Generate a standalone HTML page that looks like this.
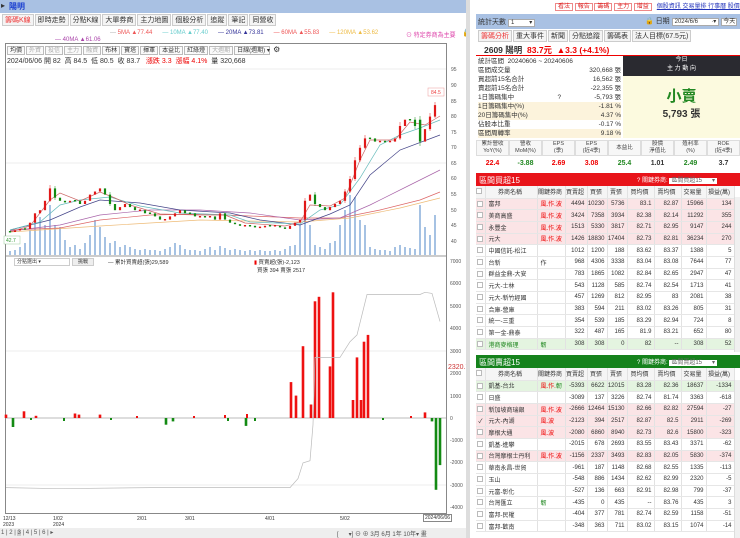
<!DOCTYPE html>
<html><head><meta charset="utf-8">
<style>
*{box-sizing:border-box;margin:0;padding:0}
body{width:740px;height:538px;overflow:hidden;background:#fff;font-family:"Liberation Sans","Noto Sans CJK TC",sans-serif;font-size:7px;color:#333;position:relative}
.a{position:absolute;white-space:nowrap}
.tab{display:inline-block;border:1px solid #ccc;background:#f4f4f4;padding:1px 2px;margin-right:1px;font-size:7px;height:12px;line-height:9px}
.btn{display:inline-block;border:1px solid #bbb;background:#fafafa;padding:0 2px;font-size:6px;height:9px;line-height:8px;margin-right:1px}
table{border-collapse:collapse;width:100%;table-layout:fixed}
td{font-size:6px;height:11.7px;border-right:1px solid #e2e2e2;border-bottom:1px solid #e6e6e6;text-align:right;padding-right:2px;white-space:nowrap;overflow:hidden}
td.n{text-align:left;padding-left:3px}
tr.h td{background:#f5f5f5;text-align:center;height:12px}
tr.p td{background:#fbe4e6}
tr.g td{background:#e4f4e0}
.r{color:#e00}
.cb{display:inline-block;width:6px;height:6px;border:1px solid #bbb;background:#fff;vertical-align:middle}
</style></head><body>
<div class="a" style="left:0;top:0;width:470px;height:13px;background:#a9c1e3"></div>
<div class="a" style="left:1px;top:1px;font-size:8px">▸</div>
<div class="a" style="left:9px;top:1px;font-size:8px;color:#1a3fd0;font-weight:bold">陽明</div>
<div class="a" style="left:2px;top:14px"><span class="tab" style="color:#e33">籌碼K線</span><span class="tab">即時走勢</span><span class="tab">分點K線</span><span class="tab">大單券商</span><span class="tab">主力地圖</span><span class="tab">個股分析</span><span class="tab">追蹤</span><span class="tab">筆記</span><span class="tab">同營收</span></div>
<div class="a" style="left:110px;top:30px;font-size:6px"><span style="color:#aaa">—</span> <span style="color:#e55">5MA ▲77.44</span> &nbsp;&nbsp;&nbsp;&nbsp; <span style="color:#6cc">— 10MA ▲77.40</span> &nbsp;&nbsp;&nbsp;&nbsp; <span style="color:#339">— 20MA ▲73.81</span> &nbsp;&nbsp;&nbsp;&nbsp; <span style="color:#e55">— 60MA ▲55.83</span> &nbsp;&nbsp;&nbsp;&nbsp; <span style="color:#eb4">— 120MA ▲53.62</span></div>
<div class="a" style="left:406px;top:30px;font-size:6px;color:#d4a">⊙ 特定券商為主要</div>
<div class="a" style="left:462px;top:28px;font-size:8px">🔒</div>
<div class="a" style="left:55px;top:37px;font-size:6px;color:#a4a">— 40MA ▲61.06</div>
<div class="a" style="left:5px;top:43px;width:442px;height:471px;border:1px solid #888"></div>
<div class="a" style="left:7px;top:45px"><span class="btn">均價</span><span class="btn" style="color:#aaa">外資</span><span class="btn" style="color:#aaa">投信</span><span class="btn" style="color:#aaa">主力</span><span class="btn" style="color:#aaa">融資</span><span class="btn">布林</span><span class="btn">寶塔</span><span class="btn">揮軍</span><span class="btn">本益比</span><span class="btn">紅綠燈</span><span class="btn" style="color:#aaa">大週期</span><span class="btn" style="width:36px">日線(週期) ▾</span> <span style="font-size:8px">⚙</span></div>
<div class="a" style="left:7px;top:56px;font-size:7px">2024/06/06 開 82 &nbsp;高 84.5 &nbsp;低 80.5 &nbsp;收 83.7 &nbsp; <span class="r">漲跌 3.3 &nbsp;漲幅 4.1%</span> &nbsp;量 320,668</div>

<svg class="a" style="left:0;top:0" width="470" height="538">
<g font-size="5" fill="#555">
<text x="451" y="71">95</text><text x="451" y="87">90</text><text x="451" y="103">85</text><text x="451" y="118">80</text><text x="451" y="134">75</text><text x="451" y="149">70</text><text x="451" y="165">65</text><text x="451" y="180">60</text><text x="451" y="196">55</text><text x="451" y="212">50</text><text x="451" y="227">45</text><text x="451" y="243">40</text>
<text x="450" y="263">7000</text><text x="450" y="285">6000</text><text x="450" y="308">5000</text><text x="450" y="330">4000</text><text x="450" y="353">3000</text><text x="450" y="375">2000</text><text x="450" y="398">1000</text><text x="450" y="420">0</text><text x="450" y="442">-1000</text><text x="450" y="464">-2000</text><text x="450" y="487">-3000</text><text x="450" y="509">-4000</text>
</g>
<g stroke="#eee"><line x1="6" x2="446" y1="69" y2="69"/><line x1="6" x2="446" y1="163" y2="163"/><line x1="6" x2="446" y1="351" y2="351"/><line x1="6" x2="446" y1="485" y2="485"/></g>
<line x1="6" x2="446" y1="256" y2="256" stroke="#999"/>
<line x1="6" x2="446" y1="418" y2="418" stroke="#bbb"/>
<path fill="none" stroke="#8fb3dc" stroke-width="1.6" d="M10 255v-4M15 255v-5M20 255v-8M25 255v-12M30 255v-25M35 255v-40M40 255v-38M45 255v-30M50 255v-50M55 255v-30M60 255v-28M65 255v-15M70 255v-8M75 255v-10M80 255v-6M85 255v-12M90 255v-20M95 255v-35M100 255v-28M105 255v-18M110 255v-12M115 255v-14M120 255v-8M125 255v-10M130 255v-8M135 255v-6M140 255v-5M145 255v-6M150 255v-5M155 255v-5M160 255v-4M165 255v-6M170 255v-8M175 255v-12M180 255v-10M185 255v-6M190 255v-5M195 255v-5M200 255v-4M205 255v-6M210 255v-8M215 255v-5M220 255v-9M225 255v-7M230 255v-5M235 255v-6M240 255v-5M245 255v-4M250 255v-5M255 255v-4M260 255v-5M265 255v-4M270 255v-4M275 255v-5M280 255v-4M285 255v-6M290 255v-9M295 255v-10M300 255v-30M305 255v-40M310 255v-30M315 255v-10M320 255v-8M325 255v-6M330 255v-12M335 255v-14M340 255v-30M345 255v-45M350 255v-60M355 255v-58M360 255v-35M365 255v-30M370 255v-8M375 255v-6M380 255v-5M385 255v-5M390 255v-4M395 255v-8M400 255v-10M405 255v-8M410 255v-7M415 255v-6M420 255v-50M425 255v-28M430 255v-20M435 255v-40"/>
<g fill="none" stroke-width="0.7">
<polyline stroke="#eb7" points="10,232 100,226 200,220 300,222 350,218 400,208 440,198"/>
<polyline stroke="#d66" points="10,230 60,228 100,220 150,215 200,214 250,216 300,218 340,218 380,210 420,200 440,192"/>
<polyline stroke="#a6a" points="10,231 60,225 100,215 150,210 200,210 250,213 300,220 340,218 370,205 410,185 440,170"/>
<polyline stroke="#448" points="10,230 50,220 80,207 100,200 140,203 180,210 230,213 260,220 300,225 330,214 350,205 370,175 400,150 440,135"/>
<polyline stroke="#6bb" points="10,230 40,222 60,205 80,200 110,197 140,206 180,213 230,215 250,222 300,224 320,210 340,205 360,178 380,145 400,135 420,128 440,120"/>
<polyline stroke="#c66" points="10,232 30,226 50,200 60,193 80,201 100,192 115,198 130,205 160,214 200,215 225,215 245,223 285,226 300,222 310,205 330,206 345,198 360,160 370,140 395,140 410,122 425,125 440,116"/>
</g>
<g fill="#e01818">
<rect x="13.9" y="230.5" width="2.2" height="1.5"/><rect x="18.9" y="228.9" width="2.2" height="1.6"/><rect x="28.9" y="222.7" width="2.2" height="6.2"/><rect x="33.9" y="213.3" width="2.2" height="9.4"/><rect x="38.9" y="210.2" width="2.2" height="3.1"/><rect x="43.9" y="200.8" width="2.2" height="9.4"/><rect x="48.9" y="188.4" width="2.2" height="12.4"/><rect x="68.9" y="200.8" width="2.2" height="1.6"/><rect x="83.9" y="200.8" width="2.2" height="3.2"/><rect x="88.9" y="194.6" width="2.2" height="6.2"/><rect x="93.9" y="191.5" width="2.2" height="3.1"/><rect x="98.9" y="188.4" width="2.2" height="3.1"/><rect x="118.9" y="207.1" width="2.2" height="3.1"/><rect x="123.9" y="204" width="2.2" height="3.1"/><rect x="138.9" y="209.5" width="2.2" height="1.5"/><rect x="163.9" y="219" width="2.2" height="1.5"/><rect x="168.9" y="216.4" width="2.2" height="3.2"/><rect x="173.9" y="213.3" width="2.2" height="3.1"/><rect x="178.9" y="210.2" width="2.2" height="3.1"/><rect x="198.9" y="216" width="2.2" height="1.5"/><rect x="208.9" y="216" width="2.2" height="1.5"/><rect x="218.9" y="213.3" width="2.2" height="6.3"/><rect x="243.9" y="225" width="2.2" height="1.5"/><rect x="258.9" y="226.6" width="2.2" height="1.5"/><rect x="263.9" y="225.8" width="2.2" height="1.6"/><rect x="273.9" y="225" width="2.2" height="1.5"/><rect x="288.9" y="225.8" width="2.2" height="3.1"/><rect x="293.9" y="222.7" width="2.2" height="3.1"/><rect x="298.9" y="219.6" width="2.2" height="3.1"/><rect x="303.9" y="200.8" width="2.2" height="18.8"/><rect x="308.9" y="194.6" width="2.2" height="6.2"/><rect x="328.9" y="207.1" width="2.2" height="3.1"/><rect x="333.9" y="204" width="2.2" height="3.1"/><rect x="338.9" y="200.8" width="2.2" height="3.2"/><rect x="343.9" y="191.5" width="2.2" height="9.3"/><rect x="348.9" y="179" width="2.2" height="12.5"/><rect x="353.9" y="160.3" width="2.2" height="18.7"/><rect x="358.9" y="147.8" width="2.2" height="12.5"/><rect x="363.9" y="138.4" width="2.2" height="9.4"/><rect x="378.9" y="140.8" width="2.2" height="1.5"/><rect x="388.9" y="140.8" width="2.2" height="1.5"/><rect x="393.9" y="138.4" width="2.2" height="3.2"/><rect x="398.9" y="126" width="2.2" height="12.4"/><rect x="403.9" y="119.7" width="2.2" height="6.3"/><rect x="423.9" y="129.1" width="2.2" height="12.5"/><rect x="428.9" y="116.6" width="2.2" height="12.5"/><rect x="433.9" y="105.1" width="2.2" height="11.5"/>
</g>
<path fill="none" stroke="#e01818" stroke-width="0.5" d="M50 185V202M305 198V222M355 157V181M360 145V162M365 135V149M400 122V140M430 113V131M435 102V118M350 176V193M345 189V203"/>
<g fill="#138a13">
<rect x="8.9" y="231" width="2.2" height="1.5"/><rect x="23.9" y="228.2" width="2.2" height="1.5"/><rect x="53.9" y="188.4" width="2.2" height="9.3"/><rect x="58.9" y="197.7" width="2.2" height="3.1"/><rect x="63.9" y="200.8" width="2.2" height="1.6"/><rect x="73.9" y="200" width="2.2" height="1.5"/><rect x="78.9" y="200.8" width="2.2" height="3.2"/><rect x="103.9" y="188.4" width="2.2" height="6.2"/><rect x="108.9" y="194.6" width="2.2" height="9.4"/><rect x="113.9" y="204" width="2.2" height="6.2"/><rect x="128.9" y="204" width="2.2" height="3.1"/><rect x="133.9" y="207.1" width="2.2" height="3.1"/><rect x="143.9" y="210.2" width="2.2" height="3.1"/><rect x="148.9" y="212.5" width="2.2" height="1.5"/><rect x="153.9" y="213.3" width="2.2" height="3.1"/><rect x="158.9" y="216.4" width="2.2" height="3.2"/><rect x="183.9" y="210.2" width="2.2" height="3.1"/><rect x="188.9" y="212.5" width="2.2" height="1.5"/><rect x="193.9" y="213.3" width="2.2" height="3.1"/><rect x="203.9" y="216" width="2.2" height="1.5"/><rect x="213.9" y="216.4" width="2.2" height="3.2"/><rect x="223.9" y="213.3" width="2.2" height="6.3"/><rect x="228.9" y="219.6" width="2.2" height="3.1"/><rect x="233.9" y="222.7" width="2.2" height="1.5"/><rect x="238.9" y="224.2" width="2.2" height="1.6"/><rect x="248.9" y="225" width="2.2" height="1.5"/><rect x="253.9" y="225.8" width="2.2" height="1.6"/><rect x="268.9" y="225" width="2.2" height="1.5"/><rect x="278.9" y="225.8" width="2.2" height="1.6"/><rect x="283.9" y="227.4" width="2.2" height="1.5"/><rect x="313.9" y="194.6" width="2.2" height="9.4"/><rect x="318.9" y="204" width="2.2" height="3.1"/><rect x="323.9" y="207.1" width="2.2" height="3.1"/><rect x="368.9" y="137.6" width="2.2" height="1.5"/><rect x="373.9" y="138.4" width="2.2" height="3.2"/><rect x="383.9" y="140.8" width="2.2" height="1.5"/><rect x="408.9" y="119" width="2.2" height="1.5"/><rect x="413.9" y="119.7" width="2.2" height="6.3"/><rect x="418.9" y="119.7" width="2.4" height="21.9"/>
</g>
<path fill="none" stroke="#138a13" stroke-width="0.5" d="M55 186V200M110 192V206M315 192V206M420 116V146M415 117V129"/>
<rect x="428" y="88" width="16" height="8" fill="#fff" stroke="#e99" stroke-width="0.5"/><text x="431" y="94" font-size="5" fill="#e44">84.5</text>
<rect x="4" y="236" width="16" height="8" fill="#fff" stroke="#9c9" stroke-width="0.5"/><text x="6" y="242" font-size="5" fill="#393">42.7</text>
<g fill="#ee1111">
<rect x="4.7" y="414.6" width="2.6" height="3.4"/><rect x="22.7" y="411.3" width="2.6" height="6.7"/><rect x="34.7" y="415.8" width="2.6" height="2.2"/><rect x="73.7" y="413.5" width="2.6" height="4.5"/><rect x="77.7" y="414.6" width="2.6" height="3.4"/><rect x="98.7" y="414.6" width="2.6" height="3.4"/><rect x="136" y="416" width="2" height="2"/><rect x="193" y="416" width="2" height="2"/><rect x="224" y="415" width="2" height="3"/><rect x="246" y="414" width="2" height="4"/>
<rect x="289.7" y="382.1" width="2.6" height="35.9"/><rect x="294.7" y="395.6" width="2.6" height="22.4"/><rect x="301.7" y="346.2" width="2.6" height="71.8"/><rect x="309.7" y="404.5" width="2.6" height="13.5"/><rect x="313.7" y="301.3" width="2.6" height="116.7"/><rect x="317.7" y="296.8" width="2.6" height="121.2"/><rect x="328.7" y="366.4" width="2.6" height="51.6"/><rect x="331.7" y="292.3" width="2.6" height="125.7"/><rect x="351.7" y="400" width="2.6" height="18"/><rect x="355.7" y="357.4" width="2.6" height="60.6"/><rect x="359.7" y="400" width="2.6" height="18"/><rect x="362.7" y="341.7" width="2.6" height="76.3"/><rect x="366.7" y="334.9" width="2.6" height="83.1"/><rect x="423.7" y="412.4" width="2.6" height="5.6"/><rect x="410" y="416" width="2" height="2"/>
</g>
<g fill="#138a13">
<rect x="11.7" y="418" width="2.6" height="9"/><rect x="30" y="418" width="2" height="2"/><rect x="63" y="418" width="2" height="3"/><rect x="110" y="418" width="2" height="2"/><rect x="164.7" y="418" width="2.6" height="6.7"/><rect x="171.7" y="418" width="2.6" height="3.4"/><rect x="227" y="418" width="2" height="3"/><rect x="244.7" y="418" width="2.6" height="7.9"/><rect x="254" y="418" width="2" height="3"/><rect x="382" y="418" width="2" height="2"/><rect x="430.7" y="418" width="2.6" height="3.4"/><rect x="434.7" y="418" width="2.6" height="71.8"/><rect x="438.7" y="418" width="2.6" height="47.1"/>
</g>
<polyline fill="none" stroke="#bbb" stroke-width="0.7" points="6,487.6 60,488.7 150,487.6 290,487.6 298,478.6 303,462.9 310,460.7 313,424.7 315,357.4 340,357.4 350,341.7 357,334.9 367,294.5 420,294.5 425,292.3 432,293.4 440,321.5"/>
</svg>

<div class="a" style="left:14px;top:258px;width:56px;height:8px;border:1px solid #ccc;font-size:5px;padding-left:2px;line-height:6px">分點選出 ▾</div>
<div class="a" style="left:72px;top:258px;width:22px;height:8px;border:1px solid #ccc;background:#eee;font-size:5px;text-align:center;line-height:6px">挑戰</div>
<div class="a" style="left:108px;top:258px;font-size:5.5px">— 累計買賣超(張)29,589</div>
<div class="a" style="left:254px;top:258px;font-size:5.5px"><span style="color:#e00">▮</span> 買賣超(張)-2,123<br>&nbsp;&nbsp;買張 394 賣張 2517</div>
<div class="a" style="left:448px;top:364px;font-size:7px;color:#c33">2320.7</div>
<div class="a" style="left:3px;top:516px;font-size:5px;line-height:6px">12/13<br>2023</div>
<div class="a" style="left:53px;top:516px;font-size:5px;line-height:6px">1/02<br>2024</div>
<div class="a" style="left:137px;top:516px;font-size:5px">2/01</div>
<div class="a" style="left:185px;top:516px;font-size:5px">3/01</div>
<div class="a" style="left:265px;top:516px;font-size:5px">4/01</div>
<div class="a" style="left:340px;top:516px;font-size:5px">5/02</div>
<div class="a" style="left:423px;top:514px;font-size:5px;border:1px solid #888;padding:0 1px;background:#fff">2024/06/06</div>
<div class="a" style="left:0;top:528px;width:470px;height:10px;background:#eee"></div>
<div class="a" style="left:1px;top:529px;font-size:6px;color:#555">1 | 2 | <span style="background:#ccc">3</span> | 4 | 5 | 6 | ▸</div>
<div class="a" style="left:337px;top:529px;font-size:6px;color:#555">[&nbsp;&nbsp;&nbsp;&nbsp;&nbsp;&nbsp;▾] ⊖ ⊕ 3月 6月 1年 10年▾ 畫</div>
<div class="a" style="left:466px;top:0;width:4px;height:538px;background:#ddd"></div>

<div class="a" style="left:555px;top:1px;font-size:6px">
<span style="border:1px solid #e88;color:#d22;padding:0 2px">看法</span> <span style="border:1px solid #e88;color:#d22;padding:0 2px">報告</span> <span style="border:1px solid #e88;color:#d22;padding:0 2px">籌碼</span> <span style="border:1px solid #e88;color:#d22;padding:0 2px">主力</span> <span style="border:1px solid #e88;color:#d22;padding:0 2px">增益</span>
&nbsp; <span style="color:#23b;text-decoration:underline">個股資訊 交易量排 行事曆 股價通知</span></div>
<div class="a" style="left:476px;top:14px;width:264px;height:15px;background:#a9c1e3"></div>
<div class="a" style="left:478px;top:17px;font-size:7px">統計天數 <span style="background:#fff;border:1px solid #aaa;padding:0 2px;font-size:6px">1 &nbsp;&nbsp;&nbsp;&nbsp;&nbsp;&nbsp;&nbsp;&nbsp;▾</span></div>
<div class="a" style="left:645px;top:16px;font-size:7px">🔒 日期 <span style="background:#fff;border:1px solid #aaa;padding:0 2px;font-size:6px">2024/6/6 &nbsp;&nbsp;&nbsp;&nbsp;&nbsp;&nbsp;&nbsp;·▾</span> <span style="background:#fff;border:1px solid #aaa;padding:0 1px;font-size:6px">今天</span></div>
<div class="a" style="left:478px;top:30px;font-size:6px"><span class="tab" style="color:#e33">籌碼分析</span><span class="tab">重大事件</span><span class="tab">新聞</span><span class="tab">分點追蹤</span><span class="tab">籌碼表</span><span class="tab">法人目標(67.5元)</span></div>
<div class="a" style="left:476px;top:43px;width:264px;height:13px;border-bottom:1px solid #e00"></div>
<div class="a" style="left:484px;top:44px;font-size:8.5px;font-weight:bold">2609 陽明 &nbsp;<span class="r">83.7元 &nbsp;▲3.3 (+4.1%)</span></div>
<div class="a" style="left:478px;top:57px;width:143px;font-size:6.5px;line-height:9px">
<div>統計區間 &nbsp;20240606 ~ 20240606</div>
<div>區間成交量<span style="float:right">320,668 張</span></div>
<div>買超前15名合計<span style="float:right">16,562 張</span></div>
<div>賣超前15名合計<span style="float:right">-22,355 張</span></div>
<div>1日籌碼集中 &nbsp;&nbsp;&nbsp;&nbsp;&nbsp;&nbsp;&nbsp;&nbsp;&nbsp;&nbsp;&nbsp;&nbsp;&nbsp;&nbsp;&nbsp;&nbsp;&nbsp;&nbsp;&nbsp;&nbsp;&nbsp;&nbsp;&nbsp;?<span style="float:right">-5,793 張</span></div>
<div style="background:#fcf3dc">1日籌碼集中(%)<span style="float:right">-1.81 %</span></div>
<div style="background:#fcf3dc">20日籌碼集中(%)<span style="float:right">4.37 %</span></div>
<div>佔股本比重<span style="float:right">-0.17 %</span></div>
<div style="background:#fcf3dc">區間周轉率<span style="float:right">9.18 %</span></div>
</div>
<div class="a" style="left:623px;top:56px;width:117px;height:20px;background:#2a2a30;color:#fff;font-size:6px;text-align:center;line-height:9px">今日<br>主 力 動 向</div>
<div class="a" style="left:623px;top:76px;width:117px;height:62px;background:#fcfadf"></div>
<div class="a" style="left:623px;top:85px;width:117px;text-align:center;font-size:15px;color:#282;font-weight:bold">小賣</div>
<div class="a" style="left:623px;top:105px;width:117px;text-align:center;font-size:10px;font-weight:bold">5,793 張</div>
<div class="a" style="left:476px;top:140px;width:264px;font-size:5.5px;display:flex;text-align:center;line-height:7px;color:#444">
<div style="flex:1;border:1px solid #ddd;background:#f7f7f7">累計營收<br>YoY(%)</div><div style="flex:1;border:1px solid #ddd;background:#f7f7f7">營收<br>MoM(%)</div><div style="flex:1;border:1px solid #ddd;background:#f7f7f7">EPS<br>(季)</div><div style="flex:1;border:1px solid #ddd;background:#f7f7f7">EPS<br>(近4季)</div><div style="flex:1;border:1px solid #ddd;background:#f7f7f7;line-height:14px">本益比</div><div style="flex:1;border:1px solid #ddd;background:#f7f7f7">股價<br>淨值比</div><div style="flex:1;border:1px solid #ddd;background:#f7f7f7">殖利率<br>(%)</div><div style="flex:1;border:1px solid #ddd;background:#f7f7f7">ROE<br>(近4季)</div></div>
<div class="a" style="left:476px;top:160px;width:264px;font-size:7px;display:flex;text-align:center;font-weight:bold">
<div style="flex:1;color:#e00">22.4</div><div style="flex:1;color:#282">-3.88</div><div style="flex:1;color:#e00">2.69</div><div style="flex:1;color:#e00">3.08</div><div style="flex:1;color:#282">25.4</div><div style="flex:1">1.01</div><div style="flex:1;color:#282">2.49</div><div style="flex:1">3.7</div></div>

<div class="a" style="left:476px;top:173px;width:264px;height:13px;background:#e8141a"></div>
<div class="a" style="left:479px;top:175px;font-size:8px;color:#fff">區間買超15</div>
<div class="a" style="left:637px;top:175px;font-size:6px;color:#fff">? 關鍵券商: <span style="background:#fff;color:#666;padding:0 2px">區間買超15 &nbsp;&nbsp;&nbsp;&nbsp;&nbsp;▾</span></div>
<div class="a" style="left:476px;top:186px;width:258px">
<table><colgroup><col style="width:9px"><col style="width:52px"><col style="width:28px"><col style="width:22px"><col style="width:20px"><col style="width:20px"><col style="width:27px"><col style="width:27px"><col style="width:25px"><col style="width:28px"></colgroup>
<tr class="h"><td><span class="cb"></span></td><td>券商名稱</td><td>關鍵券商</td><td>買賣超</td><td>買張</td><td>賣張</td><td>買均價</td><td>賣均價</td><td>交易量</td><td>損益(萬)</td></tr>
<tr class="p"><td><span class="cb"></span></td><td class="n">富邦</td><td class="n r">風.作.波</td><td>4494</td><td>10230</td><td>5736</td><td>83.1</td><td>82.87</td><td>15966</td><td>134</td></tr>
<tr class="p"><td><span class="cb"></span></td><td class="n">美商高盛</td><td class="n r">風.作.波</td><td>3424</td><td>7358</td><td>3934</td><td>82.38</td><td>82.14</td><td>11292</td><td>355</td></tr>
<tr class="p"><td><span class="cb"></span></td><td class="n">永豐金</td><td class="n r">風.作.波</td><td>1513</td><td>5330</td><td>3817</td><td>82.71</td><td>82.95</td><td>9147</td><td>244</td></tr>
<tr class="p"><td><span class="cb"></span></td><td class="n">元大</td><td class="n r">風.作.波</td><td>1426</td><td>18830</td><td>17404</td><td>82.73</td><td>82.81</td><td>36234</td><td>270</td></tr>
<tr><td><span class="cb"></span></td><td class="n">中國信託-松江</td><td></td><td>1012</td><td>1200</td><td>188</td><td>83.62</td><td>83.37</td><td>1388</td><td>5</td></tr>
<tr><td><span class="cb"></span></td><td class="n">台新</td><td class="n">作</td><td>968</td><td>4306</td><td>3338</td><td>83.04</td><td>83.08</td><td>7644</td><td>77</td></tr>
<tr><td><span class="cb"></span></td><td class="n">群益金鼎-大安</td><td></td><td>783</td><td>1865</td><td>1082</td><td>82.84</td><td>82.65</td><td>2947</td><td>47</td></tr>
<tr><td><span class="cb"></span></td><td class="n">元大-士林</td><td></td><td>543</td><td>1128</td><td>585</td><td>82.74</td><td>82.54</td><td>1713</td><td>41</td></tr>
<tr><td><span class="cb"></span></td><td class="n">元大-新竹經國</td><td></td><td>457</td><td>1269</td><td>812</td><td>82.95</td><td>83</td><td>2081</td><td>38</td></tr>
<tr><td><span class="cb"></span></td><td class="n">合庫-營庫</td><td></td><td>383</td><td>594</td><td>211</td><td>83.02</td><td>83.26</td><td>805</td><td>31</td></tr>
<tr><td><span class="cb"></span></td><td class="n">統一-三重</td><td></td><td>354</td><td>539</td><td>185</td><td>83.29</td><td>82.94</td><td>724</td><td>8</td></tr>
<tr><td><span class="cb"></span></td><td class="n">第一金-鼎泰</td><td></td><td>322</td><td>487</td><td>165</td><td>81.9</td><td>83.21</td><td>652</td><td>80</td></tr>
<tr class="g"><td><span class="cb"></span></td><td class="n" style="color:#282">港商麥格理</td><td class="n" style="color:#282">韌</td><td>308</td><td>308</td><td>0</td><td>82</td><td>--</td><td>308</td><td>52</td></tr>
</table></div>

<div class="a" style="left:476px;top:355px;width:264px;height:13px;background:#15821c"></div>
<div class="a" style="left:479px;top:357px;font-size:8px;color:#fff">區間賣超15</div>
<div class="a" style="left:637px;top:357px;font-size:6px;color:#fff">? 關鍵券商: <span style="background:#fff;color:#666;padding:0 2px">區間賣超15 &nbsp;&nbsp;&nbsp;&nbsp;&nbsp;▾</span></div>
<div class="a" style="left:476px;top:368px;width:258px">
<table><colgroup><col style="width:9px"><col style="width:52px"><col style="width:28px"><col style="width:22px"><col style="width:20px"><col style="width:20px"><col style="width:27px"><col style="width:27px"><col style="width:25px"><col style="width:28px"></colgroup>
<tr class="h"><td><span class="cb"></span></td><td>券商名稱</td><td>關鍵券商</td><td>買賣超</td><td>買張</td><td>賣張</td><td>買均價</td><td>賣均價</td><td>交易量</td><td>損益(萬)</td></tr>
<tr class="g"><td><span class="cb"></span></td><td class="n">凱基-台北</td><td class="n r">風.作.<span style="color:#282">韌</span></td><td>-5393</td><td>6622</td><td>12015</td><td>83.28</td><td>82.36</td><td>18637</td><td>-1334</td></tr>
<tr><td><span class="cb"></span></td><td class="n">日盛</td><td></td><td>-3089</td><td>137</td><td>3226</td><td>82.74</td><td>81.74</td><td>3363</td><td>-618</td></tr>
<tr class="p"><td><span class="cb"></span></td><td class="n">新加坡商瑞銀</td><td class="n r">風.作.波</td><td>-2666</td><td>12464</td><td>15130</td><td>82.66</td><td>82.82</td><td>27594</td><td>-27</td></tr>
<tr class="p"><td>✓</td><td class="n">元大-內湖</td><td class="n r">風.波</td><td>-2123</td><td>394</td><td>2517</td><td>82.87</td><td>82.5</td><td>2911</td><td>-269</td></tr>
<tr class="p"><td><span class="cb"></span></td><td class="n">摩根大通</td><td class="n r">風.波</td><td>-2080</td><td>6860</td><td>8940</td><td>82.73</td><td>82.6</td><td>15800</td><td>-323</td></tr>
<tr><td><span class="cb"></span></td><td class="n">凱基-進攀</td><td></td><td>-2015</td><td>678</td><td>2693</td><td>83.55</td><td>83.43</td><td>3371</td><td>-62</td></tr>
<tr class="p"><td><span class="cb"></span></td><td class="n">台灣摩根士丹利</td><td class="n r">風.作.波</td><td>-1156</td><td>2337</td><td>3493</td><td>82.83</td><td>82.05</td><td>5830</td><td>-374</td></tr>
<tr><td><span class="cb"></span></td><td class="n">華南永昌-世貿</td><td></td><td>-961</td><td>187</td><td>1148</td><td>82.68</td><td>82.55</td><td>1335</td><td>-113</td></tr>
<tr><td><span class="cb"></span></td><td class="n">玉山</td><td></td><td>-548</td><td>886</td><td>1434</td><td>82.62</td><td>82.99</td><td>2320</td><td>-5</td></tr>
<tr><td><span class="cb"></span></td><td class="n">元富-彰化</td><td></td><td>-527</td><td>136</td><td>663</td><td>82.91</td><td>82.98</td><td>799</td><td>-37</td></tr>
<tr><td><span class="cb"></span></td><td class="n">台灣匯立</td><td class="n" style="color:#282">韌</td><td>-435</td><td>0</td><td>435</td><td>--</td><td>83.76</td><td>435</td><td>3</td></tr>
<tr><td><span class="cb"></span></td><td class="n">富邦-民權</td><td></td><td>-404</td><td>377</td><td>781</td><td>82.74</td><td>82.59</td><td>1158</td><td>-51</td></tr>
<tr><td><span class="cb"></span></td><td class="n">富邦-歡南</td><td></td><td>-348</td><td>363</td><td>711</td><td>83.02</td><td>83.15</td><td>1074</td><td>-14</td></tr>
</table></div>
<div class="a" style="left:734px;top:197px;width:6px;height:155px;background:#f0f0f0;border-left:1px solid #ddd"></div>
<div class="a" style="left:734px;top:380px;width:6px;height:158px;background:#f0f0f0;border-left:1px solid #ddd"></div>
</body></html>
